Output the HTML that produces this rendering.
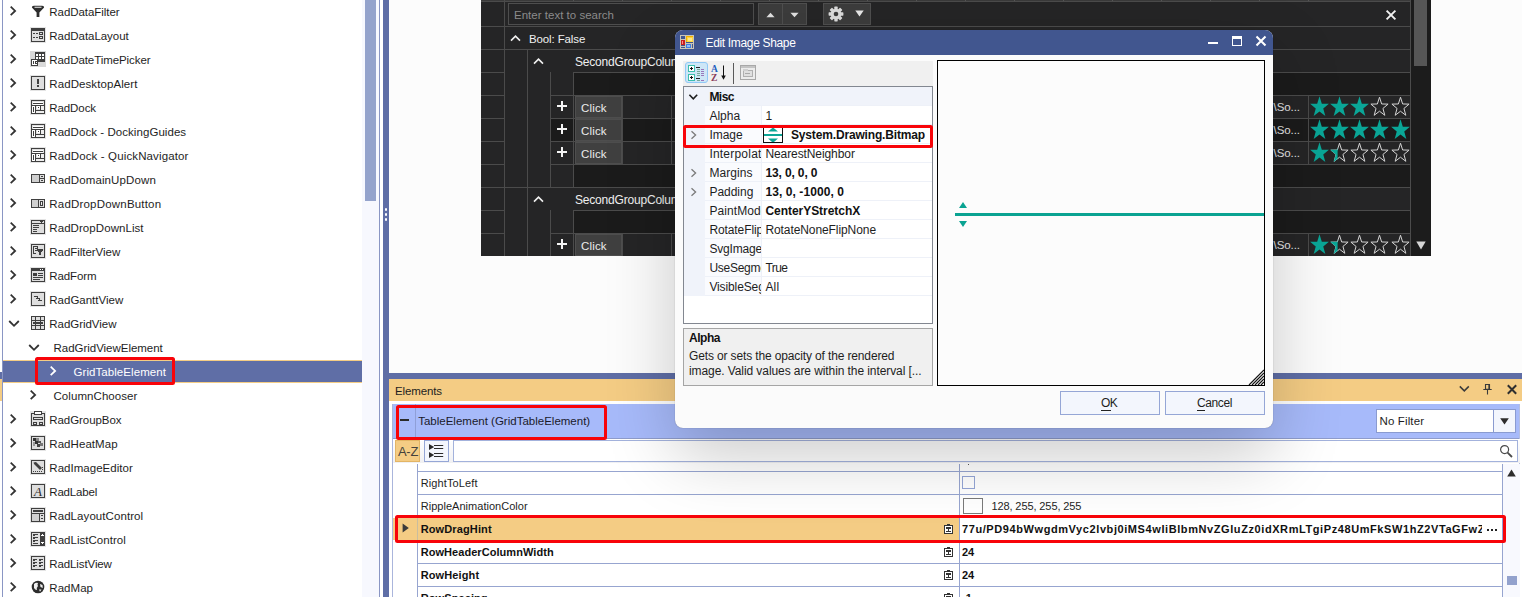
<!DOCTYPE html>
<html><head><meta charset="utf-8"><title>UI</title>
<style>
html,body{margin:0;padding:0;}
body{width:1522px;height:597px;overflow:hidden;position:relative;background:#fff;font-family:"Liberation Sans",sans-serif;font-size:11.5px;}
div,span,svg{position:absolute;}

</style></head>
<body>
<div style="left:0px;top:0px;width:383px;height:597px;background:#ffffff;"></div>
<div style="left:2px;top:0px;width:1px;height:597px;background:#8a96c4;"></div>
<div style="left:0px;top:372px;width:2px;height:7px;background:#5f6ea6;"></div>
<div style="left:0px;top:379px;width:2px;height:22px;background:#f4cc84;"></div>
<div style="left:362px;top:0px;width:17px;height:597px;background:#f7f8fe;"></div>
<div style="left:365px;top:0px;width:11px;height:201px;background:#94a3cc;"></div>
<div style="left:379px;top:0px;width:1px;height:597px;background:#8a96c4;"></div>
<div style="left:383px;top:0px;width:6px;height:597px;background:#5f6ea6;"></div>
<div style="left:385px;top:208px;width:2px;height:3px;background:#ffffff;border-radius:1px;"></div>
<div style="left:385px;top:213px;width:2px;height:3px;background:#ffffff;border-radius:1px;"></div>
<div style="left:385px;top:218px;width:2px;height:3px;background:#ffffff;border-radius:1px;"></div>
<svg style="position:absolute;left:9px;top:4.3px" width="10" height="14" viewBox="0 0 10 14"><path d="M1.7 2.7 L6.1 6.9 L1.7 11.1" fill="none" stroke="#333333" stroke-width="1.8"/></svg>
<svg style="position:absolute;left:30px;top:4.2px" width="16" height="16" viewBox="0 0 16 16" shape-rendering="crispEdges"><g shape-rendering="geometricPrecision"><path d="M1.9 3.4 Q1.7 2 3.8 1.8 L12.2 1.8 Q14.3 2 14.1 3.4 L9.4 8.4 L9.4 13 L6.6 13 L6.6 8.4 Z" fill="#2d2d2d"/><rect x="4.5" y="2.7" width="7" height="1.2" fill="#cfcfcf"/></g></svg>
<span style="position:absolute;top:3.50px;height:16px;line-height:16px;font-size:11.5px;color:#1e1e1e;white-space:pre;left:49.3px;letter-spacing:-0.051px;">RadDataFilter</span>
<svg style="position:absolute;left:9px;top:28.3px" width="10" height="14" viewBox="0 0 10 14"><path d="M1.7 2.7 L6.1 6.9 L1.7 11.1" fill="none" stroke="#333333" stroke-width="1.8"/></svg>
<svg style="position:absolute;left:30px;top:27px" width="16" height="16" viewBox="0 0 16 16" shape-rendering="crispEdges"><rect x="0" y="0" width="16" height="16" fill="#e4e4e4"/><rect x="1.5" y="1.5" width="13" height="13" fill="#dedede" stroke="#3f3f3f"/><rect x="1" y="1" width="14" height="3" fill="#3f3f3f"/><rect x="3" y="6" width="2" height="1" fill="#3f3f3f"/><rect x="6" y="6" width="2" height="1" fill="#3f3f3f"/><rect x="3" y="10" width="2" height="1" fill="#3f3f3f"/><rect x="6" y="10" width="2" height="1" fill="#3f3f3f"/><rect x="9" y="5" width="4" height="1" fill="#3f3f3f"/><rect x="9" y="7" width="4" height="1" fill="#3f3f3f"/><rect x="9" y="5" width="1" height="3" fill="#3f3f3f"/><rect x="12" y="5" width="1" height="3" fill="#3f3f3f"/><rect x="9" y="9" width="4" height="1" fill="#3f3f3f"/><rect x="9" y="11" width="4" height="1" fill="#3f3f3f"/><rect x="9" y="9" width="1" height="3" fill="#3f3f3f"/><rect x="12" y="9" width="1" height="3" fill="#3f3f3f"/></svg>
<span style="position:absolute;top:27.50px;height:16px;line-height:16px;font-size:11.5px;color:#1e1e1e;white-space:pre;left:49.3px;letter-spacing:-0.040px;">RadDataLayout</span>
<svg style="position:absolute;left:9px;top:52.3px" width="10" height="14" viewBox="0 0 10 14"><path d="M1.7 2.7 L6.1 6.9 L1.7 11.1" fill="none" stroke="#333333" stroke-width="1.8"/></svg>
<svg style="position:absolute;left:30px;top:51px" width="16" height="16" viewBox="0 0 16 16" shape-rendering="crispEdges"><rect x="0" y="0" width="16" height="16" fill="#d9d9d9"/><rect x="5" y="1" width="10" height="10" fill="#3f3f3f"/><rect x="6" y="3" width="2" height="2" fill="#fff"/><rect x="9" y="3" width="2" height="2" fill="#fff"/><rect x="12" y="3" width="2" height="2" fill="#fff"/><rect x="6" y="6" width="2" height="2" fill="#fff"/><rect x="9" y="6" width="2" height="2" fill="#fff"/><rect x="12" y="6" width="2" height="2" fill="#fff"/><rect x="1" y="8" width="7" height="7" fill="#3f3f3f"/><rect x="2" y="9" width="5" height="5" fill="#fff"/><rect x="3" y="10" width="1" height="3" fill="#3f3f3f"/><rect x="5" y="10" width="1" height="3" fill="#3f3f3f"/><rect x="5" y="10" width="2" height="1" fill="#3f3f3f"/><rect x="5" y="12" width="2" height="1" fill="#3f3f3f"/></svg>
<span style="position:absolute;top:51.50px;height:16px;line-height:16px;font-size:11.5px;color:#1e1e1e;white-space:pre;left:49.3px;letter-spacing:-0.072px;">RadDateTimePicker</span>
<svg style="position:absolute;left:9px;top:76.3px" width="10" height="14" viewBox="0 0 10 14"><path d="M1.7 2.7 L6.1 6.9 L1.7 11.1" fill="none" stroke="#333333" stroke-width="1.8"/></svg>
<svg style="position:absolute;left:30px;top:75px" width="16" height="16" viewBox="0 0 16 16" shape-rendering="crispEdges"><rect x="0" y="0" width="16" height="16" fill="#e4e4e4"/><rect x="1.5" y="1.5" width="13" height="13" fill="#dedede" stroke="#3f3f3f"/><rect x="7" y="4" width="2" height="5" fill="#3f3f3f"/><rect x="7" y="10" width="2" height="2" fill="#3f3f3f"/></svg>
<span style="position:absolute;top:75.50px;height:16px;line-height:16px;font-size:11.5px;color:#1e1e1e;white-space:pre;left:49.3px;letter-spacing:0.087px;">RadDesktopAlert</span>
<svg style="position:absolute;left:9px;top:100.3px" width="10" height="14" viewBox="0 0 10 14"><path d="M1.7 2.7 L6.1 6.9 L1.7 11.1" fill="none" stroke="#333333" stroke-width="1.8"/></svg>
<svg style="position:absolute;left:30px;top:99px" width="16" height="16" viewBox="0 0 16 16" shape-rendering="crispEdges"><rect x="0" y="0" width="16" height="16" fill="#e4e4e4"/><rect x="1.5" y="1.5" width="13" height="13" fill="#dedede" stroke="#3f3f3f"/><rect x="3" y="3" width="10" height="1" fill="#fff"/><rect x="3" y="4" width="10" height="1" fill="#3f3f3f"/><rect x="3" y="5" width="10" height="1" fill="#fff"/><rect x="2" y="6" width="12" height="1" fill="#3f3f3f"/><rect x="2" y="7" width="3" height="7" fill="#fff"/><rect x="3" y="8" width="1" height="5" fill="#3f3f3f"/><rect x="5" y="6" width="1" height="9" fill="#3f3f3f"/><rect x="6" y="11" width="9" height="1" fill="#3f3f3f"/><rect x="7" y="7" width="3" height="3" fill="#fff"/><rect x="8" y="8" width="1" height="1" fill="#3f3f3f"/><rect x="10" y="6" width="1" height="5" fill="#3f3f3f"/><rect x="11" y="7" width="3" height="4" fill="#eee"/><rect x="6" y="12" width="8" height="2" fill="#eee"/></svg>
<span style="position:absolute;top:99.50px;height:16px;line-height:16px;font-size:11.5px;color:#1e1e1e;white-space:pre;left:49.3px;letter-spacing:-0.090px;">RadDock</span>
<svg style="position:absolute;left:9px;top:124.3px" width="10" height="14" viewBox="0 0 10 14"><path d="M1.7 2.7 L6.1 6.9 L1.7 11.1" fill="none" stroke="#333333" stroke-width="1.8"/></svg>
<svg style="position:absolute;left:30px;top:123px" width="16" height="16" viewBox="0 0 16 16" shape-rendering="crispEdges"><rect x="0" y="0" width="16" height="16" fill="#e4e4e4"/><rect x="1.5" y="1.5" width="13" height="13" fill="#dedede" stroke="#3f3f3f"/><rect x="3" y="3" width="10" height="1" fill="#fff"/><rect x="3" y="4" width="10" height="1" fill="#3f3f3f"/><rect x="3" y="5" width="10" height="1" fill="#fff"/><rect x="2" y="6" width="12" height="1" fill="#3f3f3f"/><rect x="2" y="7" width="3" height="7" fill="#fff"/><rect x="3" y="8" width="1" height="5" fill="#3f3f3f"/><rect x="5" y="6" width="1" height="9" fill="#3f3f3f"/><rect x="6" y="11" width="9" height="1" fill="#3f3f3f"/><rect x="7" y="7" width="3" height="3" fill="#fff"/><rect x="8" y="8" width="1" height="1" fill="#3f3f3f"/><rect x="10" y="6" width="1" height="5" fill="#3f3f3f"/><rect x="11" y="7" width="3" height="4" fill="#eee"/><rect x="6" y="12" width="8" height="2" fill="#eee"/></svg>
<span style="position:absolute;top:123.50px;height:16px;line-height:16px;font-size:11.5px;color:#1e1e1e;white-space:pre;left:49.3px;letter-spacing:0.060px;">RadDock - DockingGuides</span>
<svg style="position:absolute;left:9px;top:148.3px" width="10" height="14" viewBox="0 0 10 14"><path d="M1.7 2.7 L6.1 6.9 L1.7 11.1" fill="none" stroke="#333333" stroke-width="1.8"/></svg>
<svg style="position:absolute;left:30px;top:147px" width="16" height="16" viewBox="0 0 16 16" shape-rendering="crispEdges"><rect x="0" y="0" width="16" height="16" fill="#e4e4e4"/><rect x="1.5" y="1.5" width="13" height="13" fill="#dedede" stroke="#3f3f3f"/><rect x="3" y="3" width="10" height="1" fill="#fff"/><rect x="3" y="4" width="10" height="1" fill="#3f3f3f"/><rect x="3" y="5" width="10" height="1" fill="#fff"/><rect x="2" y="6" width="12" height="1" fill="#3f3f3f"/><rect x="2" y="7" width="3" height="7" fill="#fff"/><rect x="3" y="8" width="1" height="5" fill="#3f3f3f"/><rect x="5" y="6" width="1" height="9" fill="#3f3f3f"/><rect x="6" y="11" width="9" height="1" fill="#3f3f3f"/><rect x="7" y="7" width="3" height="3" fill="#fff"/><rect x="8" y="8" width="1" height="1" fill="#3f3f3f"/><rect x="10" y="6" width="1" height="5" fill="#3f3f3f"/><rect x="11" y="7" width="3" height="4" fill="#eee"/><rect x="6" y="12" width="8" height="2" fill="#eee"/></svg>
<span style="position:absolute;top:147.50px;height:16px;line-height:16px;font-size:11.5px;color:#1e1e1e;white-space:pre;left:49.3px;letter-spacing:0.129px;">RadDock - QuickNavigator</span>
<svg style="position:absolute;left:9px;top:172.3px" width="10" height="14" viewBox="0 0 10 14"><path d="M1.7 2.7 L6.1 6.9 L1.7 11.1" fill="none" stroke="#333333" stroke-width="1.8"/></svg>
<svg style="position:absolute;left:30px;top:171px" width="16" height="16" viewBox="0 0 16 16" shape-rendering="crispEdges"><rect x="1.5" y="3.5" width="13" height="8" fill="#dedede" stroke="#3f3f3f"/><rect x="9" y="4" width="1" height="8" fill="#3f3f3f"/><rect x="10" y="7" width="5" height="1" fill="#3f3f3f"/><rect x="11" y="5" width="2" height="1" fill="#3f3f3f"/><rect x="11" y="9" width="2" height="1" fill="#3f3f3f"/><rect x="2" y="4" width="7" height="7" fill="#cfcfcf"/></svg>
<span style="position:absolute;top:171.50px;height:16px;line-height:16px;font-size:11.5px;color:#1e1e1e;white-space:pre;left:49.3px;letter-spacing:0.122px;">RadDomainUpDown</span>
<svg style="position:absolute;left:9px;top:196.3px" width="10" height="14" viewBox="0 0 10 14"><path d="M1.7 2.7 L6.1 6.9 L1.7 11.1" fill="none" stroke="#333333" stroke-width="1.8"/></svg>
<svg style="position:absolute;left:30px;top:195px" width="16" height="16" viewBox="0 0 16 16" shape-rendering="crispEdges"><rect x="1.5" y="4.5" width="13" height="8" fill="#dedede" stroke="#3f3f3f"/><rect x="8" y="5" width="1" height="8" fill="#3f3f3f"/><rect x="10" y="6" width="3" height="5" fill="#3f3f3f"/><rect x="11" y="7" width="1" height="3" fill="#eee"/><rect x="2" y="5" width="6" height="7" fill="#cfcfcf"/></svg>
<span style="position:absolute;top:195.50px;height:16px;line-height:16px;font-size:11.5px;color:#1e1e1e;white-space:pre;left:49.3px;letter-spacing:0.196px;">RadDropDownButton</span>
<svg style="position:absolute;left:9px;top:220.3px" width="10" height="14" viewBox="0 0 10 14"><path d="M1.7 2.7 L6.1 6.9 L1.7 11.1" fill="none" stroke="#333333" stroke-width="1.8"/></svg>
<svg style="position:absolute;left:30px;top:219px" width="16" height="16" viewBox="0 0 16 16" shape-rendering="crispEdges"><rect x="0" y="0" width="16" height="16" fill="#e4e4e4"/><rect x="1.5" y="1.5" width="13" height="13" fill="#dedede" stroke="#3f3f3f"/><rect x="1" y="4" width="14" height="1" fill="#3f3f3f"/><rect x="10" y="2" width="3" height="1" fill="#3f3f3f"/><rect x="11" y="3" width="1" height="1" fill="#3f3f3f"/><rect x="3" y="6" width="6" height="1" fill="#3f3f3f"/><rect x="3" y="8" width="6" height="1" fill="#3f3f3f"/><rect x="3" y="10" width="4" height="1" fill="#3f3f3f"/><rect x="3" y="12" width="4" height="1" fill="#3f3f3f"/></svg>
<span style="position:absolute;top:219.50px;height:16px;line-height:16px;font-size:11.5px;color:#1e1e1e;white-space:pre;left:49.3px;letter-spacing:0.068px;">RadDropDownList</span>
<svg style="position:absolute;left:9px;top:244.3px" width="10" height="14" viewBox="0 0 10 14"><path d="M1.7 2.7 L6.1 6.9 L1.7 11.1" fill="none" stroke="#333333" stroke-width="1.8"/></svg>
<svg style="position:absolute;left:30px;top:243px" width="16" height="16" viewBox="0 0 16 16" shape-rendering="crispEdges"><rect x="0" y="0" width="16" height="16" fill="#e4e4e4"/><rect x="1.5" y="1.5" width="13" height="13" fill="#dedede" stroke="#3f3f3f"/><rect x="3" y="3" width="5" height="1" fill="#3f3f3f"/><rect x="3" y="3" width="1" height="8" fill="#3f3f3f"/><rect x="3" y="10" width="3" height="1" fill="#3f3f3f"/><rect x="5" y="5" width="3" height="1" fill="#3f3f3f"/><rect x="5" y="7" width="2" height="1" fill="#3f3f3f"/><rect x="7" y="6" width="6" height="2" fill="#3f3f3f"/><rect x="8" y="8" width="4" height="1" fill="#3f3f3f"/><rect x="9" y="9" width="2" height="3" fill="#3f3f3f"/><rect x="7" y="3" width="1" height="3" fill="#3f3f3f"/></svg>
<span style="position:absolute;top:243.50px;height:16px;line-height:16px;font-size:11.5px;color:#1e1e1e;white-space:pre;left:49.3px;letter-spacing:-0.038px;">RadFilterView</span>
<svg style="position:absolute;left:9px;top:268.3px" width="10" height="14" viewBox="0 0 10 14"><path d="M1.7 2.7 L6.1 6.9 L1.7 11.1" fill="none" stroke="#333333" stroke-width="1.8"/></svg>
<svg style="position:absolute;left:30px;top:267px" width="16" height="16" viewBox="0 0 16 16" shape-rendering="crispEdges"><rect x="0" y="0" width="16" height="16" fill="#e4e4e4"/><rect x="1.5" y="1.5" width="13" height="13" fill="#dedede" stroke="#3f3f3f"/><rect x="1" y="1" width="14" height="3" fill="#3f3f3f"/><rect x="10" y="2" width="1" height="1" fill="#fff"/><rect x="12" y="2" width="1" height="1" fill="#fff"/><rect x="3" y="6" width="4" height="3" fill="#3f3f3f"/><rect x="8" y="6" width="5" height="1" fill="#3f3f3f"/><rect x="8" y="8" width="5" height="1" fill="#3f3f3f"/><rect x="3" y="10" width="10" height="1" fill="#3f3f3f"/><rect x="3" y="12" width="7" height="1" fill="#3f3f3f"/></svg>
<span style="position:absolute;top:267.50px;height:16px;line-height:16px;font-size:11.5px;color:#1e1e1e;white-space:pre;left:49.3px;letter-spacing:-0.118px;">RadForm</span>
<svg style="position:absolute;left:9px;top:292.3px" width="10" height="14" viewBox="0 0 10 14"><path d="M1.7 2.7 L6.1 6.9 L1.7 11.1" fill="none" stroke="#333333" stroke-width="1.8"/></svg>
<svg style="position:absolute;left:30px;top:291px" width="16" height="16" viewBox="0 0 16 16" shape-rendering="crispEdges"><rect x="0" y="0" width="16" height="16" fill="#e4e4e4"/><rect x="1.5" y="1.5" width="13" height="13" fill="#dedede" stroke="#3f3f3f"/><rect x="4" y="5" width="4" height="1" fill="#3f3f3f"/><rect x="6" y="7" width="4" height="1" fill="#3f3f3f"/><rect x="8" y="9" width="4" height="1" fill="#3f3f3f"/><rect x="7" y="6" width="1" height="1" fill="#3f3f3f"/><rect x="9" y="8" width="1" height="1" fill="#3f3f3f"/></svg>
<span style="position:absolute;top:291.50px;height:16px;line-height:16px;font-size:11.5px;color:#1e1e1e;white-space:pre;left:49.3px;letter-spacing:-0.004px;">RadGanttView</span>
<svg style="position:absolute;left:7px;top:319px" width="14" height="10" viewBox="0 0 14 10"><path d="M2.2 2 L7 6.8 L11.8 2" fill="none" stroke="#333333" stroke-width="1.8"/></svg>
<svg style="position:absolute;left:30px;top:315px" width="16" height="16" viewBox="0 0 16 16" shape-rendering="crispEdges"><rect x="1.5" y="1.5" width="13" height="13" fill="#dedede" stroke="#3f3f3f"/><rect x="1" y="5" width="14" height="1" fill="#3f3f3f"/><rect x="1" y="10" width="14" height="1" fill="#3f3f3f"/><rect x="5" y="1" width="1" height="14" fill="#3f3f3f"/><rect x="10" y="1" width="1" height="14" fill="#3f3f3f"/><rect x="3" y="7" width="10" height="2" fill="#3f3f3f"/></svg>
<span style="position:absolute;top:315.50px;height:16px;line-height:16px;font-size:11.5px;color:#1e1e1e;white-space:pre;left:49.3px;letter-spacing:-0.039px;">RadGridView</span>
<svg style="position:absolute;left:27px;top:343px" width="14" height="10" viewBox="0 0 14 10"><path d="M2.2 2 L7 6.8 L11.8 2" fill="none" stroke="#333333" stroke-width="1.8"/></svg>
<span style="position:absolute;top:339.50px;height:16px;line-height:16px;font-size:11.5px;color:#1e1e1e;white-space:pre;left:53.5px;letter-spacing:-0.027px;">RadGridViewElement</span>
<div style="left:3px;top:360px;width:359px;height:23px;background:#5f6ea6;border-top:1px solid #f4cc84;border-bottom:1px solid #f4cc84;box-sizing:border-box;"></div>
<svg style="position:absolute;left:49px;top:364.3px" width="10" height="14" viewBox="0 0 10 14"><path d="M1.7 2.7 L6.1 6.9 L1.7 11.1" fill="none" stroke="#ffffff" stroke-width="1.8"/></svg>
<span style="position:absolute;top:363.50px;height:16px;line-height:16px;font-size:11.5px;color:#ffffff;white-space:pre;left:73.5px;letter-spacing:0.067px;">GridTableElement</span>
<svg style="position:absolute;left:29px;top:388.3px" width="10" height="14" viewBox="0 0 10 14"><path d="M1.7 2.7 L6.1 6.9 L1.7 11.1" fill="none" stroke="#333333" stroke-width="1.8"/></svg>
<span style="position:absolute;top:387.50px;height:16px;line-height:16px;font-size:11.5px;color:#1e1e1e;white-space:pre;left:53.5px;letter-spacing:0.065px;">ColumnChooser</span>
<svg style="position:absolute;left:9px;top:412.3px" width="10" height="14" viewBox="0 0 10 14"><path d="M1.7 2.7 L6.1 6.9 L1.7 11.1" fill="none" stroke="#333333" stroke-width="1.8"/></svg>
<svg style="position:absolute;left:30px;top:411px" width="16" height="16" viewBox="0 0 16 16" shape-rendering="crispEdges"><rect x="0" y="0" width="16" height="16" fill="#e4e4e4"/><rect x="1.5" y="2.5" width="13" height="12" fill="#dedede" stroke="#3f3f3f"/><rect x="4" y="1" width="8" height="2" fill="#fff"/><rect x="4" y="0" width="8" height="1" fill="#3f3f3f"/><rect x="4" y="3" width="8" height="1" fill="#3f3f3f"/><rect x="4" y="0" width="1" height="4" fill="#3f3f3f"/><rect x="11" y="0" width="1" height="4" fill="#3f3f3f"/><rect x="3" y="6" width="10" height="1" fill="#3f3f3f"/><rect x="3" y="8" width="10" height="1" fill="#3f3f3f"/><rect x="3" y="6" width="1" height="3" fill="#3f3f3f"/><rect x="12" y="6" width="1" height="3" fill="#3f3f3f"/><rect x="3" y="11" width="4" height="1" fill="#3f3f3f"/><rect x="3" y="13" width="4" height="1" fill="#3f3f3f"/><rect x="3" y="11" width="1" height="3" fill="#3f3f3f"/><rect x="6" y="11" width="1" height="3" fill="#3f3f3f"/><rect x="9" y="11" width="4" height="1" fill="#3f3f3f"/><rect x="9" y="13" width="4" height="1" fill="#3f3f3f"/><rect x="9" y="11" width="1" height="3" fill="#3f3f3f"/><rect x="12" y="11" width="1" height="3" fill="#3f3f3f"/></svg>
<span style="position:absolute;top:411.50px;height:16px;line-height:16px;font-size:11.5px;color:#1e1e1e;white-space:pre;left:49.3px;letter-spacing:-0.072px;">RadGroupBox</span>
<svg style="position:absolute;left:9px;top:436.3px" width="10" height="14" viewBox="0 0 10 14"><path d="M1.7 2.7 L6.1 6.9 L1.7 11.1" fill="none" stroke="#333333" stroke-width="1.8"/></svg>
<svg style="position:absolute;left:30px;top:435px" width="16" height="16" viewBox="0 0 16 16" shape-rendering="crispEdges"><rect x="0" y="0" width="16" height="16" fill="#e4e4e4"/><rect x="1.5" y="1.5" width="13" height="13" fill="#dedede" stroke="#3f3f3f"/><rect x="3" y="3" width="3" height="3" fill="#333"/><rect x="6" y="3" width="3" height="3" fill="#888"/><rect x="5" y="6" width="3" height="3" fill="#333"/><rect x="8" y="6" width="3" height="2" fill="#555"/><rect x="7" y="9" width="3" height="3" fill="#444"/><rect x="10" y="8" width="3" height="3" fill="#777"/><rect x="3" y="7" width="2" height="4" fill="#999"/></svg>
<span style="position:absolute;top:435.50px;height:16px;line-height:16px;font-size:11.5px;color:#1e1e1e;white-space:pre;left:49.3px;letter-spacing:0.058px;">RadHeatMap</span>
<svg style="position:absolute;left:9px;top:460.3px" width="10" height="14" viewBox="0 0 10 14"><path d="M1.7 2.7 L6.1 6.9 L1.7 11.1" fill="none" stroke="#333333" stroke-width="1.8"/></svg>
<svg style="position:absolute;left:30px;top:459px" width="16" height="16" viewBox="0 0 16 16" shape-rendering="crispEdges"><rect x="0" y="0" width="16" height="16" fill="#e4e4e4"/><rect x="1.5" y="1.5" width="13" height="13" fill="#dedede" stroke="#3f3f3f"/><g shape-rendering="geometricPrecision"><path d="M3.5 3.5 L6 3 L12 9 L10 11 L4 5 Z" fill="#3f3f3f"/></g><rect x="3" y="12" width="1" height="1" fill="#3f3f3f"/><rect x="5" y="12" width="1" height="1" fill="#3f3f3f"/><rect x="7" y="12" width="1" height="1" fill="#3f3f3f"/><rect x="9" y="12" width="1" height="1" fill="#3f3f3f"/><rect x="11" y="12" width="1" height="1" fill="#3f3f3f"/><rect x="12" y="10" width="1" height="1" fill="#3f3f3f"/><rect x="12" y="8" width="1" height="1" fill="#3f3f3f"/></svg>
<span style="position:absolute;top:459.50px;height:16px;line-height:16px;font-size:11.5px;color:#1e1e1e;white-space:pre;left:49.3px;letter-spacing:0.028px;">RadImageEditor</span>
<svg style="position:absolute;left:9px;top:484.3px" width="10" height="14" viewBox="0 0 10 14"><path d="M1.7 2.7 L6.1 6.9 L1.7 11.1" fill="none" stroke="#333333" stroke-width="1.8"/></svg>
<svg style="position:absolute;left:30px;top:483px" width="16" height="16" viewBox="0 0 16 16" shape-rendering="crispEdges"><rect x="0" y="0" width="16" height="16" fill="#e4e4e4"/><rect x="1.5" y="1.5" width="13" height="13" fill="#dedede" stroke="#3f3f3f"/><text x="8" y="12.5" font-family="Liberation Serif" font-style="italic" font-size="13" text-anchor="middle" fill="#2d2d2d" shape-rendering="geometricPrecision">A</text></svg>
<span style="position:absolute;top:483.50px;height:16px;line-height:16px;font-size:11.5px;color:#1e1e1e;white-space:pre;left:49.3px;letter-spacing:-0.191px;">RadLabel</span>
<svg style="position:absolute;left:9px;top:508.3px" width="10" height="14" viewBox="0 0 10 14"><path d="M1.7 2.7 L6.1 6.9 L1.7 11.1" fill="none" stroke="#333333" stroke-width="1.8"/></svg>
<svg style="position:absolute;left:30px;top:507px" width="16" height="16" viewBox="0 0 16 16" shape-rendering="crispEdges"><rect x="0" y="0" width="16" height="16" fill="#e4e4e4"/><rect x="1.5" y="1.5" width="13" height="13" fill="#dedede" stroke="#3f3f3f"/><rect x="3" y="3" width="10" height="2" fill="#3f3f3f"/><rect x="1" y="6" width="14" height="1" fill="#3f3f3f"/><rect x="9" y="6" width="1" height="9" fill="#3f3f3f"/><rect x="11" y="8" width="2" height="1" fill="#3f3f3f"/><rect x="11" y="11" width="2" height="1" fill="#3f3f3f"/><rect x="2" y="7" width="7" height="7" fill="#d0d0d0"/></svg>
<span style="position:absolute;top:507.50px;height:16px;line-height:16px;font-size:11.5px;color:#1e1e1e;white-space:pre;left:49.3px;letter-spacing:0.077px;">RadLayoutControl</span>
<svg style="position:absolute;left:9px;top:532.3px" width="10" height="14" viewBox="0 0 10 14"><path d="M1.7 2.7 L6.1 6.9 L1.7 11.1" fill="none" stroke="#333333" stroke-width="1.8"/></svg>
<svg style="position:absolute;left:30px;top:531px" width="16" height="16" viewBox="0 0 16 16" shape-rendering="crispEdges"><rect x="0" y="0" width="16" height="16" fill="#e4e4e4"/><rect x="1.5" y="1.5" width="13" height="13" fill="#dedede" stroke="#3f3f3f"/><rect x="3" y="3" width="5" height="1" fill="#3f3f3f"/><rect x="3" y="4" width="2" height="1" fill="#3f3f3f"/><rect x="3" y="6" width="5" height="1" fill="#3f3f3f"/><rect x="3" y="7" width="2" height="1" fill="#3f3f3f"/><rect x="3" y="9" width="5" height="1" fill="#3f3f3f"/><rect x="3" y="10" width="2" height="1" fill="#3f3f3f"/><rect x="3" y="12" width="5" height="1" fill="#3f3f3f"/><rect x="10" y="1" width="5" height="14" fill="#3f3f3f"/><rect x="12" y="3" width="1" height="1" fill="#fff"/><rect x="11" y="4" width="3" height="1" fill="#fff"/><rect x="11" y="11" width="3" height="1" fill="#fff"/><rect x="12" y="12" width="1" height="1" fill="#fff"/></svg>
<span style="position:absolute;top:531.50px;height:16px;line-height:16px;font-size:11.5px;color:#1e1e1e;white-space:pre;left:49.3px;letter-spacing:0.028px;">RadListControl</span>
<svg style="position:absolute;left:9px;top:556.3px" width="10" height="14" viewBox="0 0 10 14"><path d="M1.7 2.7 L6.1 6.9 L1.7 11.1" fill="none" stroke="#333333" stroke-width="1.8"/></svg>
<svg style="position:absolute;left:30px;top:555px" width="16" height="16" viewBox="0 0 16 16" shape-rendering="crispEdges"><rect x="0" y="0" width="16" height="16" fill="#e4e4e4"/><rect x="1.5" y="1.5" width="13" height="13" fill="#dedede" stroke="#3f3f3f"/><rect x="3" y="4" width="4" height="1" fill="#3f3f3f"/><rect x="3" y="5" width="2" height="1" fill="#3f3f3f"/><rect x="9" y="4" width="4" height="1" fill="#3f3f3f"/><rect x="9" y="5" width="2" height="1" fill="#3f3f3f"/><rect x="3" y="7" width="4" height="1" fill="#3f3f3f"/><rect x="3" y="8" width="2" height="1" fill="#3f3f3f"/><rect x="9" y="7" width="4" height="1" fill="#3f3f3f"/><rect x="9" y="8" width="2" height="1" fill="#3f3f3f"/><rect x="3" y="10" width="4" height="1" fill="#3f3f3f"/><rect x="3" y="11" width="2" height="1" fill="#3f3f3f"/><rect x="9" y="10" width="4" height="1" fill="#3f3f3f"/><rect x="9" y="11" width="2" height="1" fill="#3f3f3f"/></svg>
<span style="position:absolute;top:555.50px;height:16px;line-height:16px;font-size:11.5px;color:#1e1e1e;white-space:pre;left:49.3px;letter-spacing:-0.109px;">RadListView</span>
<svg style="position:absolute;left:9px;top:580.3px" width="10" height="14" viewBox="0 0 10 14"><path d="M1.7 2.7 L6.1 6.9 L1.7 11.1" fill="none" stroke="#333333" stroke-width="1.8"/></svg>
<svg style="position:absolute;left:30px;top:579px" width="16" height="16" viewBox="0 0 16 16" shape-rendering="crispEdges"><g shape-rendering="geometricPrecision"><circle cx="8" cy="8" r="6.3" fill="#2d2d2d"/><path d="M4 5 Q6 3 8 4 Q7 6 8 7 Q6 9 7 11 Q5 11 4 9 Z M10 5 L12.5 6 L12.8 9 L10.5 8 Z M9 10.5 L11.5 10.5 L10 12.8 Z" fill="#f0f0f0"/></g></svg>
<span style="position:absolute;top:579.50px;height:16px;line-height:16px;font-size:11.5px;color:#1e1e1e;white-space:pre;left:49.3px;letter-spacing:0.039px;">RadMap</span>
<div style="left:35px;top:356.5px;width:140px;height:28.5px;border:3px solid #f80409;border-radius:2.5px;box-sizing:border-box;"></div>
<div style="left:389px;top:0px;width:1133px;height:373px;background:#fcfcfc;"></div>
<div style="left:481px;top:0px;width:950px;height:256px;background:#252526;"></div>
<div style="left:1411px;top:0px;width:20px;height:256px;background:#1c1c1c;"></div>
<div style="left:1414px;top:0px;width:13px;height:66px;background:#565656;"></div>
<svg style="position:absolute;left:1416px;top:241px" width="10" height="9" viewBox="0 0 10 9"><path d="M0.3 0.5 L9.7 0.5 L5 8.6 Z" fill="#d6d6d6"/></svg>
<div style="left:1410px;top:0px;width:1px;height:256px;background:#4b4b4b;"></div>
<div style="left:481px;top:0px;width:929px;height:1px;background:#3a3a3a;"></div>
<div style="left:481px;top:1px;width:929px;height:1px;background:#4b4b4b;"></div>
<div style="left:504px;top:0px;width:1px;height:1px;background:#555;"></div>
<div style="left:573px;top:0px;width:1px;height:1px;background:#555;"></div>
<div style="left:622px;top:0px;width:1px;height:1px;background:#555;"></div>
<div style="left:671px;top:0px;width:1px;height:1px;background:#555;"></div>
<div style="left:720px;top:0px;width:1px;height:1px;background:#555;"></div>
<div style="left:769px;top:0px;width:1px;height:1px;background:#555;"></div>
<div style="left:818px;top:0px;width:1px;height:1px;background:#555;"></div>
<div style="left:867px;top:0px;width:1px;height:1px;background:#555;"></div>
<div style="left:916px;top:0px;width:1px;height:1px;background:#555;"></div>
<div style="left:965px;top:0px;width:1px;height:1px;background:#555;"></div>
<div style="left:1014px;top:0px;width:1px;height:1px;background:#555;"></div>
<div style="left:1063px;top:0px;width:1px;height:1px;background:#555;"></div>
<div style="left:1112px;top:0px;width:1px;height:1px;background:#555;"></div>
<div style="left:1161px;top:0px;width:1px;height:1px;background:#555;"></div>
<div style="left:1210px;top:0px;width:1px;height:1px;background:#555;"></div>
<div style="left:1259px;top:0px;width:1px;height:1px;background:#555;"></div>
<div style="left:1308px;top:0px;width:1px;height:1px;background:#555;"></div>
<div style="left:504px;top:0px;width:1px;height:256px;background:#4b4b4b;"></div>
<div style="left:481px;top:26px;width:23px;height:1px;background:#4b4b4b;"></div>
<div style="left:481px;top:49px;width:23px;height:1px;background:#4b4b4b;"></div>
<div style="left:481px;top:72px;width:23px;height:1px;background:#4b4b4b;"></div>
<div style="left:481px;top:95px;width:23px;height:1px;background:#4b4b4b;"></div>
<div style="left:481px;top:118px;width:23px;height:1px;background:#4b4b4b;"></div>
<div style="left:481px;top:141px;width:23px;height:1px;background:#4b4b4b;"></div>
<div style="left:481px;top:164px;width:23px;height:1px;background:#4b4b4b;"></div>
<div style="left:481px;top:187px;width:23px;height:1px;background:#4b4b4b;"></div>
<div style="left:481px;top:210px;width:23px;height:1px;background:#4b4b4b;"></div>
<div style="left:481px;top:233px;width:23px;height:1px;background:#4b4b4b;"></div>
<div style="left:505px;top:26px;width:905px;height:1px;background:#4b4b4b;"></div>
<div style="left:508px;top:3px;width:246px;height:22px;background:#252526;border:1px solid #4e4e4e;box-sizing:border-box;"></div>
<span style="position:absolute;top:6.50px;height:16px;line-height:16px;font-size:11.5px;color:#8b8b8b;white-space:pre;left:514px;letter-spacing:0.014px;">Enter text to search</span>
<div style="left:758px;top:3px;width:49px;height:22px;background:#3c3c3c;border:1px solid #4f4f4f;box-sizing:border-box;"></div>
<div style="left:782px;top:4px;width:1px;height:20px;background:#4f4f4f;"></div>
<svg style="position:absolute;left:766px;top:12px" width="9" height="6" viewBox="0 0 9 6"><path d="M0.4 5.2 L4.5 0.8 L8.6 5.2 Z" fill="#e2e2e2"/></svg>
<svg style="position:absolute;left:790px;top:12px" width="9" height="6" viewBox="0 0 9 6"><path d="M0.4 0.8 L8.6 0.8 L4.5 5.2 Z" fill="#e2e2e2"/></svg>
<div style="left:823px;top:3px;width:48px;height:22px;background:#3c3c3c;border:1px solid #4f4f4f;box-sizing:border-box;"></div>
<svg style="position:absolute;left:828px;top:6px" width="16" height="16" viewBox="-8 -8 16 16"><g fill="#dcdcdc"><rect x="-1.7" y="-7.4" width="3.4" height="4" rx="0.6" transform="rotate(0)"/><rect x="-1.7" y="-7.4" width="3.4" height="4" rx="0.6" transform="rotate(45)"/><rect x="-1.7" y="-7.4" width="3.4" height="4" rx="0.6" transform="rotate(90)"/><rect x="-1.7" y="-7.4" width="3.4" height="4" rx="0.6" transform="rotate(135)"/><rect x="-1.7" y="-7.4" width="3.4" height="4" rx="0.6" transform="rotate(180)"/><rect x="-1.7" y="-7.4" width="3.4" height="4" rx="0.6" transform="rotate(225)"/><rect x="-1.7" y="-7.4" width="3.4" height="4" rx="0.6" transform="rotate(270)"/><rect x="-1.7" y="-7.4" width="3.4" height="4" rx="0.6" transform="rotate(315)"/><circle r="5.3"/></g><circle r="2.3" fill="#3c3c3c"/></svg>
<svg style="position:absolute;left:855px;top:10px" width="9" height="7" viewBox="0 0 9 7"><path d="M0.3 0.4 L8.7 0.4 L4.5 6.6 Z" fill="#e8e8e8"/></svg>
<svg style="position:absolute;left:1385px;top:9px" width="12" height="12" viewBox="0 0 12 12"><path d="M1.6 1.6 L10.4 10.4 M10.4 1.6 L1.6 10.4" stroke="#f2f2f2" stroke-width="1.9" fill="none"/></svg>
<div style="left:505px;top:49px;width:905px;height:1px;background:#4b4b4b;"></div>
<svg style="position:absolute;left:509px;top:32.7px" width="14" height="10" viewBox="0 0 14 10"><path d="M2 7.6 L6.5 3.1 L11 7.6" fill="none" stroke="#f0f0f0" stroke-width="1.6"/></svg>
<span style="position:absolute;top:30.50px;height:16px;line-height:16px;font-size:11.5px;color:#f0f0f0;white-space:pre;left:529px;letter-spacing:-0.121px;">Bool: False</span>
<div style="left:527px;top:50px;width:1px;height:206px;background:#4b4b4b;"></div>
<svg style="position:absolute;left:532px;top:55.7px" width="14" height="10" viewBox="0 0 14 10"><path d="M2 7.6 L6.5 3.1 L11 7.6" fill="none" stroke="#f0f0f0" stroke-width="1.6"/></svg>
<span style="position:absolute;top:53.50px;height:16px;line-height:16px;font-size:12px;color:#f0f0f0;white-space:pre;left:575px;letter-spacing:-0.195px;">SecondGroupColumn</span>
<div style="left:573px;top:72px;width:837px;height:1px;background:#4b4b4b;"></div>
<div style="left:550px;top:72px;width:1px;height:115px;background:#4b4b4b;"></div>
<div style="left:573px;top:72px;width:1px;height:115px;background:#4b4b4b;"></div>
<div style="left:574px;top:73px;width:836px;height:22px;background:#1b1b1b;"></div>
<div style="left:550px;top:95px;width:860px;height:1px;background:#4b4b4b;"></div>
<div style="left:557px;top:105px;width:10px;height:2px;background:#f4f4f4;"></div>
<div style="left:561px;top:101px;width:2px;height:10px;background:#f4f4f4;"></div>
<div style="left:575px;top:96px;width:47px;height:22px;background:#404040;border:1px solid #4e4e4e;box-sizing:border-box;"></div>
<span style="position:absolute;top:99.50px;height:16px;line-height:16px;font-size:11.5px;color:#ececec;white-space:pre;left:581px;letter-spacing:0.156px;">Click</span>
<div style="left:622px;top:96px;width:1px;height:22px;background:#4b4b4b;"></div>
<div style="left:671px;top:96px;width:1px;height:22px;background:#4b4b4b;"></div>
<div style="left:1308px;top:96px;width:1px;height:22px;background:#4b4b4b;"></div>
<span style="position:absolute;top:98.80px;height:16px;line-height:16px;font-size:11.5px;color:#e6e6e6;white-space:pre;right:222px;letter-spacing:-0.060px;">\So...</span>
<div style="left:550px;top:118px;width:860px;height:1px;background:#4b4b4b;"></div>
<div style="left:551px;top:119px;width:22px;height:22px;background:#1b1b1b;"></div>
<div style="left:574px;top:119px;width:836px;height:22px;background:#1b1b1b;"></div>
<div style="left:557px;top:128px;width:10px;height:2px;background:#f4f4f4;"></div>
<div style="left:561px;top:124px;width:2px;height:10px;background:#f4f4f4;"></div>
<div style="left:575px;top:119px;width:47px;height:22px;background:#404040;border:1px solid #4e4e4e;box-sizing:border-box;"></div>
<span style="position:absolute;top:122.50px;height:16px;line-height:16px;font-size:11.5px;color:#ececec;white-space:pre;left:581px;letter-spacing:0.156px;">Click</span>
<div style="left:622px;top:119px;width:1px;height:22px;background:#4b4b4b;"></div>
<div style="left:671px;top:119px;width:1px;height:22px;background:#4b4b4b;"></div>
<div style="left:1308px;top:119px;width:1px;height:22px;background:#4b4b4b;"></div>
<span style="position:absolute;top:121.80px;height:16px;line-height:16px;font-size:11.5px;color:#e6e6e6;white-space:pre;right:222px;letter-spacing:-0.060px;">\So...</span>
<div style="left:550px;top:141px;width:860px;height:1px;background:#4b4b4b;"></div>
<div style="left:557px;top:151px;width:10px;height:2px;background:#f4f4f4;"></div>
<div style="left:561px;top:147px;width:2px;height:10px;background:#f4f4f4;"></div>
<div style="left:575px;top:142px;width:47px;height:22px;background:#404040;border:1px solid #4e4e4e;box-sizing:border-box;"></div>
<span style="position:absolute;top:145.50px;height:16px;line-height:16px;font-size:11.5px;color:#ececec;white-space:pre;left:581px;letter-spacing:0.156px;">Click</span>
<div style="left:622px;top:142px;width:1px;height:22px;background:#4b4b4b;"></div>
<div style="left:671px;top:142px;width:1px;height:22px;background:#4b4b4b;"></div>
<div style="left:1308px;top:142px;width:1px;height:22px;background:#4b4b4b;"></div>
<span style="position:absolute;top:144.80px;height:16px;line-height:16px;font-size:11.5px;color:#e6e6e6;white-space:pre;right:222px;letter-spacing:-0.060px;">\So...</span>
<div style="left:550px;top:164px;width:860px;height:1px;background:#4b4b4b;"></div>
<div style="left:574px;top:165px;width:836px;height:22px;background:#1b1b1b;"></div>
<div style="left:481px;top:187px;width:929px;height:1px;background:#4b4b4b;"></div>
<svg style="position:absolute;left:532px;top:193.7px" width="14" height="10" viewBox="0 0 14 10"><path d="M2 7.6 L6.5 3.1 L11 7.6" fill="none" stroke="#f0f0f0" stroke-width="1.6"/></svg>
<span style="position:absolute;top:191.50px;height:16px;line-height:16px;font-size:12px;color:#f0f0f0;white-space:pre;left:575px;letter-spacing:-0.195px;">SecondGroupColumn</span>
<div style="left:573px;top:210px;width:837px;height:1px;background:#4b4b4b;"></div>
<div style="left:550px;top:210px;width:1px;height:46px;background:#4b4b4b;"></div>
<div style="left:573px;top:210px;width:1px;height:46px;background:#4b4b4b;"></div>
<div style="left:574px;top:211px;width:836px;height:22px;background:#1b1b1b;"></div>
<div style="left:550px;top:233px;width:860px;height:1px;background:#4b4b4b;"></div>
<div style="left:557px;top:243px;width:10px;height:2px;background:#f4f4f4;"></div>
<div style="left:561px;top:239px;width:2px;height:10px;background:#f4f4f4;"></div>
<div style="left:575px;top:234px;width:47px;height:22px;background:#404040;border:1px solid #4e4e4e;box-sizing:border-box;"></div>
<span style="position:absolute;top:237.50px;height:16px;line-height:16px;font-size:11.5px;color:#ececec;white-space:pre;left:581px;letter-spacing:0.156px;">Click</span>
<div style="left:622px;top:234px;width:1px;height:22px;background:#4b4b4b;"></div>
<div style="left:671px;top:234px;width:1px;height:22px;background:#4b4b4b;"></div>
<div style="left:1308px;top:234px;width:1px;height:22px;background:#4b4b4b;"></div>
<span style="position:absolute;top:236.80px;height:16px;line-height:16px;font-size:11.5px;color:#e6e6e6;white-space:pre;right:222px;letter-spacing:-0.060px;">\So...</span>
<svg style="position:absolute;left:1309.7px;top:96.3px" width="19" height="20" viewBox="0 0 19 20"><polygon points="9.50,0.30 11.82,7.63 18.90,7.79 13.26,12.47 15.31,19.90 9.50,15.47 3.69,19.90 5.74,12.47 0.10,7.79 7.18,7.63" fill="#0aa697"/></svg>
<svg style="position:absolute;left:1329.9px;top:96.3px" width="19" height="20" viewBox="0 0 19 20"><polygon points="9.50,0.30 11.82,7.63 18.90,7.79 13.26,12.47 15.31,19.90 9.50,15.47 3.69,19.90 5.74,12.47 0.10,7.79 7.18,7.63" fill="#0aa697"/></svg>
<svg style="position:absolute;left:1350.1000000000001px;top:96.3px" width="19" height="20" viewBox="0 0 19 20"><polygon points="9.50,0.30 11.82,7.63 18.90,7.79 13.26,12.47 15.31,19.90 9.50,15.47 3.69,19.90 5.74,12.47 0.10,7.79 7.18,7.63" fill="#0aa697"/></svg>
<svg style="position:absolute;left:1370.3px;top:96.3px" width="19" height="20" viewBox="0 0 19 20"><polygon points="9.50,1.20 11.63,7.97 18.10,8.11 12.94,12.44 14.82,19.30 9.50,15.21 4.18,19.30 6.06,12.44 0.90,8.11 7.37,7.97" fill="none" stroke="#d4d4d4" stroke-width="1"/></svg>
<svg style="position:absolute;left:1390.5px;top:96.3px" width="19" height="20" viewBox="0 0 19 20"><polygon points="9.50,1.20 11.63,7.97 18.10,8.11 12.94,12.44 14.82,19.30 9.50,15.21 4.18,19.30 6.06,12.44 0.90,8.11 7.37,7.97" fill="none" stroke="#d4d4d4" stroke-width="1"/></svg>
<svg style="position:absolute;left:1309.7px;top:119.3px" width="19" height="20" viewBox="0 0 19 20"><polygon points="9.50,0.30 11.82,7.63 18.90,7.79 13.26,12.47 15.31,19.90 9.50,15.47 3.69,19.90 5.74,12.47 0.10,7.79 7.18,7.63" fill="#0aa697"/></svg>
<svg style="position:absolute;left:1329.9px;top:119.3px" width="19" height="20" viewBox="0 0 19 20"><polygon points="9.50,0.30 11.82,7.63 18.90,7.79 13.26,12.47 15.31,19.90 9.50,15.47 3.69,19.90 5.74,12.47 0.10,7.79 7.18,7.63" fill="#0aa697"/></svg>
<svg style="position:absolute;left:1350.1000000000001px;top:119.3px" width="19" height="20" viewBox="0 0 19 20"><polygon points="9.50,0.30 11.82,7.63 18.90,7.79 13.26,12.47 15.31,19.90 9.50,15.47 3.69,19.90 5.74,12.47 0.10,7.79 7.18,7.63" fill="#0aa697"/></svg>
<svg style="position:absolute;left:1370.3px;top:119.3px" width="19" height="20" viewBox="0 0 19 20"><polygon points="9.50,0.30 11.82,7.63 18.90,7.79 13.26,12.47 15.31,19.90 9.50,15.47 3.69,19.90 5.74,12.47 0.10,7.79 7.18,7.63" fill="#0aa697"/></svg>
<svg style="position:absolute;left:1390.5px;top:119.3px" width="19" height="20" viewBox="0 0 19 20"><polygon points="9.50,0.30 11.82,7.63 18.90,7.79 13.26,12.47 15.31,19.90 9.50,15.47 3.69,19.90 5.74,12.47 0.10,7.79 7.18,7.63" fill="#0aa697"/></svg>
<svg style="position:absolute;left:1309.7px;top:142.3px" width="19" height="20" viewBox="0 0 19 20"><polygon points="9.50,0.30 11.82,7.63 18.90,7.79 13.26,12.47 15.31,19.90 9.50,15.47 3.69,19.90 5.74,12.47 0.10,7.79 7.18,7.63" fill="#0aa697"/></svg>
<svg style="position:absolute;left:1329.9px;top:142.3px" width="19" height="20" viewBox="0 0 19 20"><polygon points="9.50,1.20 11.63,7.97 18.10,8.11 12.94,12.44 14.82,19.30 9.50,15.21 4.18,19.30 6.06,12.44 0.90,8.11 7.37,7.97" fill="none" stroke="#d4d4d4" stroke-width="1"/><clipPath id="cp12"><rect x="0" y="0" width="7.60" height="20"/></clipPath><polygon points="9.50,0.30 11.82,7.63 18.90,7.79 13.26,12.47 15.31,19.90 9.50,15.47 3.69,19.90 5.74,12.47 0.10,7.79 7.18,7.63" fill="#0aa697" clip-path="url(#cp12)"/></svg>
<svg style="position:absolute;left:1350.1000000000001px;top:142.3px" width="19" height="20" viewBox="0 0 19 20"><polygon points="9.50,1.20 11.63,7.97 18.10,8.11 12.94,12.44 14.82,19.30 9.50,15.21 4.18,19.30 6.06,12.44 0.90,8.11 7.37,7.97" fill="none" stroke="#d4d4d4" stroke-width="1"/></svg>
<svg style="position:absolute;left:1370.3px;top:142.3px" width="19" height="20" viewBox="0 0 19 20"><polygon points="9.50,1.20 11.63,7.97 18.10,8.11 12.94,12.44 14.82,19.30 9.50,15.21 4.18,19.30 6.06,12.44 0.90,8.11 7.37,7.97" fill="none" stroke="#d4d4d4" stroke-width="1"/></svg>
<svg style="position:absolute;left:1390.5px;top:142.3px" width="19" height="20" viewBox="0 0 19 20"><polygon points="9.50,1.20 11.63,7.97 18.10,8.11 12.94,12.44 14.82,19.30 9.50,15.21 4.18,19.30 6.06,12.44 0.90,8.11 7.37,7.97" fill="none" stroke="#d4d4d4" stroke-width="1"/></svg>
<svg style="position:absolute;left:1309.7px;top:234.3px" width="19" height="20" viewBox="0 0 19 20"><polygon points="9.50,0.30 11.82,7.63 18.90,7.79 13.26,12.47 15.31,19.90 9.50,15.47 3.69,19.90 5.74,12.47 0.10,7.79 7.18,7.63" fill="#0aa697"/></svg>
<svg style="position:absolute;left:1329.9px;top:234.3px" width="19" height="20" viewBox="0 0 19 20"><polygon points="9.50,1.20 11.63,7.97 18.10,8.11 12.94,12.44 14.82,19.30 9.50,15.21 4.18,19.30 6.06,12.44 0.90,8.11 7.37,7.97" fill="none" stroke="#d4d4d4" stroke-width="1"/><clipPath id="cp17"><rect x="0" y="0" width="7.60" height="20"/></clipPath><polygon points="9.50,0.30 11.82,7.63 18.90,7.79 13.26,12.47 15.31,19.90 9.50,15.47 3.69,19.90 5.74,12.47 0.10,7.79 7.18,7.63" fill="#0aa697" clip-path="url(#cp17)"/></svg>
<svg style="position:absolute;left:1350.1000000000001px;top:234.3px" width="19" height="20" viewBox="0 0 19 20"><polygon points="9.50,1.20 11.63,7.97 18.10,8.11 12.94,12.44 14.82,19.30 9.50,15.21 4.18,19.30 6.06,12.44 0.90,8.11 7.37,7.97" fill="none" stroke="#d4d4d4" stroke-width="1"/></svg>
<svg style="position:absolute;left:1370.3px;top:234.3px" width="19" height="20" viewBox="0 0 19 20"><polygon points="9.50,1.20 11.63,7.97 18.10,8.11 12.94,12.44 14.82,19.30 9.50,15.21 4.18,19.30 6.06,12.44 0.90,8.11 7.37,7.97" fill="none" stroke="#d4d4d4" stroke-width="1"/></svg>
<svg style="position:absolute;left:1390.5px;top:234.3px" width="19" height="20" viewBox="0 0 19 20"><polygon points="9.50,1.20 11.63,7.97 18.10,8.11 12.94,12.44 14.82,19.30 9.50,15.21 4.18,19.30 6.06,12.44 0.90,8.11 7.37,7.97" fill="none" stroke="#d4d4d4" stroke-width="1"/></svg>
<div style="left:389px;top:373px;width:1133px;height:224px;background:#ffffff;"></div>
<div style="left:389px;top:373px;width:1133px;height:6px;background:#5f6ea6;"></div>
<div style="left:389px;top:379px;width:1133px;height:22px;background:#f4cc84;"></div>
<span style="position:absolute;top:382.50px;height:16px;line-height:16px;font-size:11.5px;color:#1e1e1e;white-space:pre;left:395px;letter-spacing:-0.117px;">Elements</span>
<svg style="position:absolute;left:1458px;top:384px" width="13" height="10" viewBox="0 0 13 10"><path d="M1.8 2.4 L6.3 6.9 L10.8 2.4" stroke="#3a3a3a" stroke-width="1.5" fill="none"/></svg>
<svg style="position:absolute;left:1482px;top:383px" width="11" height="12" viewBox="0 0 11 12"><path d="M3.5 1.5 L7.5 1.5 L7.5 6.2 L3.5 6.2 Z M1.3 6.5 L9.7 6.5 M5.5 6.5 L5.5 11.5 M6.9 1.5 L6.9 6" stroke="#3a3a3a" stroke-width="1.1" fill="none"/></svg>
<svg style="position:absolute;left:1506px;top:384px" width="12" height="11" viewBox="0 0 12 11"><path d="M1.8 1.3 L10.2 9.7 M10.2 1.3 L1.8 9.7" stroke="#2f2f2f" stroke-width="2" fill="none"/></svg>
<div style="left:392px;top:404px;width:1128px;height:34px;background:#a7bafa;"></div>
<div style="left:392px;top:438px;width:1128px;height:1px;background:#8f9ccb;"></div>
<div style="left:392px;top:404px;width:1px;height:193px;background:#aab5dc;"></div>
<div style="left:1519px;top:404px;width:1px;height:193px;background:#b4bee2;"></div>
<div style="left:415px;top:404px;width:1px;height:34px;background:#8f9fd8;"></div>
<div style="left:400px;top:419px;width:9px;height:2px;background:#2a2a2a;"></div>
<span style="position:absolute;top:412.50px;height:16px;line-height:16px;font-size:11.5px;color:#1b1b2b;white-space:pre;left:418.2px;letter-spacing:0.002px;">TableElement (GridTableElement)</span>
<div style="left:1376px;top:409px;width:140px;height:24px;background:#ffffff;border:1px solid #8a9bd0;box-sizing:border-box;"></div>
<div style="left:1493px;top:410px;width:22px;height:22px;background:#f3f6fd;border-left:1px solid #8a9bd0;box-sizing:border-box;"></div>
<svg style="position:absolute;left:1500px;top:418px" width="9" height="7" viewBox="0 0 9 7"><path d="M0.2 0.3 L8.8 0.3 L4.5 6.6 Z" fill="#2d2d2d"/></svg>
<span style="position:absolute;top:412.50px;height:16px;line-height:16px;font-size:11.5px;color:#1e1e1e;white-space:pre;left:1379.5px;letter-spacing:0.139px;">No Filter</span>
<div style="left:393px;top:439px;width:1127px;height:24px;background:linear-gradient(#ffffff,#f0f0f2);"></div>
<div style="left:395px;top:440px;width:25px;height:22px;background:#f4cc84;border:1px solid #e3b565;box-sizing:border-box;"></div>
<span style="position:absolute;top:443.50px;height:16px;line-height:16px;font-size:13px;color:#45423c;white-space:pre;left:397.9px;letter-spacing:-0.251px;">A-Z</span>
<div style="left:424px;top:440px;width:25px;height:22px;background:#f3f6fd;border:1px solid #95a6d6;box-sizing:border-box;"></div>
<svg style="position:absolute;left:428px;top:443px" width="17" height="16" viewBox="0 0 17 16"><path d="M1 1 L6.2 4 L1 7 Z M1 9 L6.2 12 L1 15 Z" fill="#2a2a2a"/><path d="M6 2.5 H15.2 M6 5.5 H15.2 M6 10.5 H15.2 M6 13.5 H15.2" stroke="#2a2a2a" stroke-width="1.1"/></svg>
<div style="left:453px;top:440px;width:1065px;height:22px;background:#ffffff;border:1px solid #a3b2dc;box-sizing:border-box;"></div>
<svg style="position:absolute;left:1499px;top:444px" width="15" height="15" viewBox="0 0 15 15"><circle cx="5.6" cy="5.6" r="4" fill="none" stroke="#4a4a4a" stroke-width="1.2"/><path d="M8.6 8.6 L13 13" stroke="#4a4a4a" stroke-width="1.8"/></svg>
<div style="left:417px;top:464px;width:1px;height:133px;background:#97a5d0;"></div>
<div style="left:959px;top:464px;width:1px;height:133px;background:#97a5d0;"></div>
<div style="left:1502px;top:464px;width:1px;height:133px;background:#97a5d0;"></div>
<div style="left:418px;top:471px;width:1085px;height:1px;background:#97a5d0;"></div>
<div style="left:418px;top:494px;width:1085px;height:1px;background:#97a5d0;"></div>
<div style="left:418px;top:517px;width:1085px;height:1px;background:#97a5d0;"></div>
<div style="left:418px;top:540px;width:1085px;height:1px;background:#97a5d0;"></div>
<div style="left:418px;top:563px;width:1085px;height:1px;background:#97a5d0;"></div>
<div style="left:418px;top:586px;width:1085px;height:1px;background:#97a5d0;"></div>
<div style="left:968px;top:464px;width:1px;height:1px;background:#555;"></div>
<div style="left:1503px;top:464px;width:17px;height:133px;background:#f8f9fe;"></div>
<svg style="position:absolute;left:1507px;top:469px" width="9" height="8" viewBox="0 0 9 8"><path d="M0.2 7.5 L4.5 0.6 L8.8 7.5 Z" fill="#2d2d2d"/></svg>
<div style="left:1506.5px;top:575.5px;width:10px;height:9.5px;background:#93a2cd;"></div>
<div style="left:393px;top:518px;width:566px;height:22px;background:#f4cc84;"></div>
<div style="left:417px;top:518px;width:1px;height:22px;background:#c9bd9e;"></div>
<div style="left:959px;top:517px;width:544px;height:24px;background:#ffffff;border:1px solid #8fa0d6;box-sizing:border-box;"></div>
<svg style="position:absolute;left:402px;top:523px" width="8" height="10" viewBox="0 0 8 10"><path d="M0.6 0.6 L6.8 5 L0.6 9.4 Z" fill="#3a3a3a"/></svg>
<span style="position:absolute;top:475.00px;height:16px;line-height:16px;font-size:11px;color:#1e1e1e;white-space:pre;left:420.7px;letter-spacing:0.122px;">RightToLeft</span>
<span style="position:absolute;top:498.00px;height:16px;line-height:16px;font-size:11px;color:#1e1e1e;white-space:pre;left:420.7px;letter-spacing:0.030px;">RippleAnimationColor</span>
<span style="position:absolute;top:520.50px;height:16px;line-height:16px;font-size:11px;color:#111;white-space:pre;left:420.7px;font-weight:bold;letter-spacing:0.121px;">RowDragHint</span>
<span style="position:absolute;top:543.50px;height:16px;line-height:16px;font-size:11px;color:#111;white-space:pre;left:420.7px;font-weight:bold;letter-spacing:0.055px;">RowHeaderColumnWidth</span>
<span style="position:absolute;top:566.50px;height:16px;line-height:16px;font-size:11px;color:#111;white-space:pre;left:420.7px;font-weight:bold;letter-spacing:0.116px;">RowHeight</span>
<span style="position:absolute;top:589.50px;height:16px;line-height:16px;font-size:11px;color:#111;white-space:pre;left:420.7px;font-weight:bold;letter-spacing:0.098px;">RowSpacing</span>
<div style="left:962px;top:476px;width:13px;height:13px;background:#ffffff;border:1px solid #95a6d6;box-sizing:border-box;"></div>
<div style="left:963px;top:498px;width:20px;height:16px;background:#ffffff;border:1px solid #7a7a7a;box-sizing:border-box;"></div>
<span style="position:absolute;top:498.00px;height:16px;line-height:16px;font-size:11px;color:#1e1e1e;white-space:pre;left:991.4px;letter-spacing:-0.097px;">128, 255, 255, 255</span>
<span style="position:absolute;top:520.50px;height:16px;line-height:16px;font-size:11px;color:#111;white-space:pre;left:962px;font-weight:bold;letter-spacing:0.586px;width:519.5px;overflow:hidden;">77u/PD94bWwgdmVyc2lvbj0iMS4wIiBlbmNvZGluZz0idXRmLTgiPz48UmFkSW1hZ2VTaGFwZ</span>
<div style="left:1487px;top:529px;width:2px;height:2px;background:#222;"></div><div style="left:1491px;top:529px;width:2px;height:2px;background:#222;"></div><div style="left:1495px;top:529px;width:2px;height:2px;background:#222;"></div>
<span style="position:absolute;top:543.50px;height:16px;line-height:16px;font-size:11px;color:#111;white-space:pre;left:962px;font-weight:bold;">24</span>
<span style="position:absolute;top:566.50px;height:16px;line-height:16px;font-size:11px;color:#111;white-space:pre;left:962px;font-weight:bold;">24</span>
<span style="position:absolute;top:589.50px;height:16px;line-height:16px;font-size:11px;color:#111;white-space:pre;left:962px;font-weight:bold;">-1</span>
<svg style="position:absolute;left:943px;top:523.0px" width="11" height="12" viewBox="0 0 11 12" shape-rendering="crispEdges"><rect x="1.5" y="2.5" width="8" height="8" fill="#fff" stroke="#333"/><rect x="4" y="1" width="3" height="2" fill="#333"/><rect x="3" y="4" width="5" height="2" fill="#333"/><rect x="5" y="6" width="1" height="3" fill="#333"/><rect x="3" y="8" width="5" height="1" fill="#333"/></svg>
<svg style="position:absolute;left:943px;top:546.0px" width="11" height="12" viewBox="0 0 11 12" shape-rendering="crispEdges"><rect x="1.5" y="2.5" width="8" height="8" fill="#fff" stroke="#333"/><rect x="4" y="1" width="3" height="2" fill="#333"/><rect x="3" y="4" width="5" height="2" fill="#333"/><rect x="5" y="6" width="1" height="3" fill="#333"/><rect x="3" y="8" width="5" height="1" fill="#333"/></svg>
<svg style="position:absolute;left:943px;top:569.0px" width="11" height="12" viewBox="0 0 11 12" shape-rendering="crispEdges"><rect x="1.5" y="2.5" width="8" height="8" fill="#fff" stroke="#333"/><rect x="4" y="1" width="3" height="2" fill="#333"/><rect x="3" y="4" width="5" height="2" fill="#333"/><rect x="5" y="6" width="1" height="3" fill="#333"/><rect x="3" y="8" width="5" height="1" fill="#333"/></svg>
<svg style="position:absolute;left:943px;top:592.0px" width="11" height="12" viewBox="0 0 11 12" shape-rendering="crispEdges"><rect x="1.5" y="2.5" width="8" height="8" fill="#fff" stroke="#333"/><rect x="4" y="1" width="3" height="2" fill="#333"/><rect x="3" y="4" width="5" height="2" fill="#333"/><rect x="5" y="6" width="1" height="3" fill="#333"/><rect x="3" y="8" width="5" height="1" fill="#333"/></svg>
<div style="left:396px;top:404.5px;width:211px;height:35.5px;border:3px solid #f80409;border-radius:2.5px;box-sizing:border-box;"></div>
<div style="left:395px;top:514.5px;width:1110.5px;height:28.5px;border:3px solid #f80409;border-radius:2.5px;box-sizing:border-box;"></div>
<div style="left:675px;top:30px;width:598px;height:398px;background:#fbfbfb;border-radius:8px;overflow:hidden;box-shadow:0 27px 68px rgba(0,0,0,0.21), 0 0 1px rgba(0,0,0,0.45);"><div style="left:0px;top:0px;width:598px;height:25px;background:#41568f;"></div>
<svg style="position:absolute;left:5px;top:5px" width="14" height="14" viewBox="0 0 14 14" shape-rendering="crispEdges"><rect x="0.5" y="0.5" width="13" height="13" fill="none" stroke="#cbc6b8"/><rect x="5" y="0" width="1" height="14" fill="#cbc6b8"/><rect x="0" y="4" width="6" height="1" fill="#cbc6b8"/><rect x="0" y="11" width="6" height="1" fill="#cbc6b8"/><rect x="5" y="8" width="9" height="1" fill="#cbc6b8"/><rect x="11" y="8" width="1" height="6" fill="#cbc6b8"/><rect x="6" y="1" width="7" height="6" fill="#ffd640"/><rect x="6" y="1" width="7" height="1" fill="#f2b100"/><rect x="6" y="1" width="1" height="6" fill="#f2b100"/><rect x="8" y="3" width="4" height="3" fill="#ffe98a"/><rect x="1" y="5" width="4" height="5" fill="#c81e1e"/><rect x="2" y="6" width="1" height="3" fill="#ff8a8a"/><rect x="6" y="9" width="5" height="4" fill="#3f7fe0"/><rect x="7" y="10" width="3" height="2" fill="#8fbcff"/></svg>
<div style="left:533px;top:12px;width:10px;height:2px;background:#ffffff;"></div>
<div style="left:557px;top:6px;width:10px;height:10px;border:1px solid #fff;border-top:3px solid #fff;box-sizing:border-box;"></div>
<svg style="position:absolute;left:580px;top:5px" width="12" height="12" viewBox="0 0 12 12"><path d="M1.5 1.5 L10.5 10.5 M10.5 1.5 L1.5 10.5" stroke="#fff" stroke-width="2.1" fill="none"/></svg></div>
<span style="position:absolute;top:34.50px;height:16px;line-height:16px;font-size:12px;color:#ffffff;white-space:pre;left:705.5px;letter-spacing:-0.338px;">Edit Image Shape</span>
<div style="left:683px;top:61px;width:250px;height:263px;background:#f0f0f0;"></div>
<div style="left:685px;top:62px;width:23px;height:21px;background:#cde6f7;border:1px solid #90c8f6;box-sizing:border-box;border-radius:3px;"></div>
<svg style="position:absolute;left:687px;top:64px" width="18" height="18" viewBox="0 0 18 18" shape-rendering="crispEdges"><rect x="1.5" y="1.5" width="6" height="6" fill="#fff" stroke="#3dbfae"/><rect x="3" y="4" width="3" height="1" fill="#111"/><rect x="4" y="3" width="1" height="3" fill="#111"/><rect x="1.5" y="10.5" width="6" height="6" fill="#fff" stroke="#3dbfae"/><rect x="3" y="13" width="3" height="1" fill="#111"/><rect x="4" y="12" width="1" height="3" fill="#111"/><rect x="9" y="3" width="4" height="1" fill="#222"/><rect x="9" y="14" width="4" height="1" fill="#222"/><rect x="10" y="5" width="3" height="1" fill="#7a9"/><rect x="14" y="5" width="3" height="1" fill="#97b"/><rect x="10" y="7" width="3" height="1" fill="#7a9"/><rect x="14" y="7" width="3" height="1" fill="#97b"/><rect x="10" y="9" width="3" height="1" fill="#7a9"/><rect x="14" y="9" width="3" height="1" fill="#97b"/><rect x="10" y="11" width="3" height="1" fill="#7a9"/><rect x="14" y="11" width="3" height="1" fill="#97b"/><rect x="10" y="16" width="3" height="1" fill="#7a9"/><rect x="14" y="16" width="3" height="1" fill="#97b"/></svg>
<span style="position:absolute;top:60.50px;height:16px;line-height:16px;font-size:9.5px;color:#1f5fbf;white-space:pre;left:711px;font-weight:bold;font-family:'Liberation Serif';">A</span>
<span style="position:absolute;top:69.50px;height:16px;line-height:16px;font-size:9.5px;color:#8a3b5a;white-space:pre;left:711px;font-weight:bold;font-family:'Liberation Serif';">Z</span>
<svg style="position:absolute;left:719px;top:65px" width="9" height="16" viewBox="0 0 9 16"><path d="M4.5 0.5 V12" stroke="#111" stroke-width="1"/><path d="M2.2 10.6 L4.5 14.8 L6.8 10.6 Z" fill="#111"/></svg>
<div style="left:733px;top:63px;width:1px;height:21px;background:#5a5a5a;"></div>
<svg style="position:absolute;left:740px;top:65px" width="16" height="15" viewBox="0 0 16 15" shape-rendering="crispEdges"><rect x="0.5" y="0.5" width="15" height="14" fill="#ececec" stroke="#a8a8a8"/><rect x="1" y="1" width="14" height="2" fill="#c4c4c4"/><rect x="3.5" y="5.5" width="9" height="6" fill="#e0e0e0" stroke="#b0b0b0"/><rect x="3" y="4" width="5" height="2" fill="#d0d0d0"/><rect x="5" y="8" width="5" height="1" fill="#aaa"/></svg>
<div style="left:683px;top:86px;width:250px;height:238px;background:#ffffff;border:1px solid #828790;box-sizing:border-box;"></div>
<div style="left:684px;top:87px;width:21px;height:209px;background:#f0f3fa;"></div>
<div style="left:705px;top:87px;width:227px;height:19px;background:#f0f3fa;"></div>
<div style="left:705px;top:106px;width:57px;height:190px;background:#fafbfe;"></div>
<div style="left:705px;top:105px;width:227px;height:1px;background:#eef1f8;"></div>
<div style="left:705px;top:124px;width:227px;height:1px;background:#eef1f8;"></div>
<div style="left:705px;top:143px;width:227px;height:1px;background:#eef1f8;"></div>
<div style="left:705px;top:162px;width:227px;height:1px;background:#eef1f8;"></div>
<div style="left:705px;top:181px;width:227px;height:1px;background:#eef1f8;"></div>
<div style="left:705px;top:200px;width:227px;height:1px;background:#eef1f8;"></div>
<div style="left:705px;top:219px;width:227px;height:1px;background:#eef1f8;"></div>
<div style="left:705px;top:238px;width:227px;height:1px;background:#eef1f8;"></div>
<div style="left:705px;top:257px;width:227px;height:1px;background:#eef1f8;"></div>
<div style="left:705px;top:276px;width:227px;height:1px;background:#eef1f8;"></div>
<div style="left:705px;top:295px;width:227px;height:1px;background:#eef1f8;"></div>
<div style="left:761px;top:106px;width:1px;height:190px;background:#eef1f8;"></div>
<svg style="position:absolute;left:688px;top:93px" width="11" height="8" viewBox="0 0 11 8"><path d="M1.4 1.8 L5.3 5.8 L9.2 1.8" fill="none" stroke="#1e1e1e" stroke-width="1.6"/></svg>
<span style="position:absolute;top:88.50px;height:16px;line-height:16px;font-size:12px;color:#111;white-space:pre;left:709.4px;font-weight:bold;letter-spacing:-0.522px;">Misc</span>
<span style="position:absolute;top:107.50px;height:16px;line-height:16px;font-size:12px;color:#1e1e1e;white-space:pre;left:709.4px;letter-spacing:0.018px;width:51.6px;overflow:hidden;">Alpha</span>
<span style="position:absolute;top:107.50px;height:16px;line-height:16px;font-size:12px;color:#1e1e1e;white-space:pre;left:765.4px;">1</span>
<span style="position:absolute;top:126.50px;height:16px;line-height:16px;font-size:12px;color:#1e1e1e;white-space:pre;left:709.4px;letter-spacing:-0.037px;width:51.6px;overflow:hidden;">Image</span>
<span style="position:absolute;top:126.50px;height:16px;line-height:16px;font-size:12px;color:#111;white-space:pre;left:791px;font-weight:bold;letter-spacing:-0.161px;">System.Drawing.Bitmap</span>
<svg style="position:absolute;left:690px;top:129.5px" width="8" height="10" viewBox="0 0 8 10"><path d="M1.5 1.2 L5.6 5 L1.5 8.8" fill="none" stroke="#7a7a7a" stroke-width="1.3"/></svg>
<span style="position:absolute;top:145.50px;height:16px;line-height:16px;font-size:12px;color:#1e1e1e;white-space:pre;left:709.4px;letter-spacing:0.214px;width:51.6px;overflow:hidden;">Interpolation</span>
<span style="position:absolute;top:145.50px;height:16px;line-height:16px;font-size:12px;color:#1e1e1e;white-space:pre;left:765.4px;letter-spacing:-0.088px;">NearestNeighbor</span>
<span style="position:absolute;top:164.50px;height:16px;line-height:16px;font-size:12px;color:#1e1e1e;white-space:pre;left:709.4px;letter-spacing:0.069px;width:51.6px;overflow:hidden;">Margins</span>
<span style="position:absolute;top:164.50px;height:16px;line-height:16px;font-size:12px;color:#111;white-space:pre;left:765.4px;font-weight:bold;letter-spacing:-0.125px;">13, 0, 0, 0</span>
<svg style="position:absolute;left:690px;top:167.5px" width="8" height="10" viewBox="0 0 8 10"><path d="M1.5 1.2 L5.6 5 L1.5 8.8" fill="none" stroke="#7a7a7a" stroke-width="1.3"/></svg>
<span style="position:absolute;top:183.50px;height:16px;line-height:16px;font-size:12px;color:#1e1e1e;white-space:pre;left:709.4px;letter-spacing:-0.011px;width:51.6px;overflow:hidden;">Padding</span>
<span style="position:absolute;top:183.50px;height:16px;line-height:16px;font-size:12px;color:#111;white-space:pre;left:765.4px;font-weight:bold;letter-spacing:0.087px;">13, 0, -1000, 0</span>
<svg style="position:absolute;left:690px;top:186.5px" width="8" height="10" viewBox="0 0 8 10"><path d="M1.5 1.2 L5.6 5 L1.5 8.8" fill="none" stroke="#7a7a7a" stroke-width="1.3"/></svg>
<span style="position:absolute;top:202.50px;height:16px;line-height:16px;font-size:12px;color:#1e1e1e;white-space:pre;left:709.4px;letter-spacing:0.081px;width:51.6px;overflow:hidden;">PaintMode</span>
<span style="position:absolute;top:202.50px;height:16px;line-height:16px;font-size:12px;color:#111;white-space:pre;left:765.4px;font-weight:bold;letter-spacing:-0.038px;">CenterYStretchX</span>
<span style="position:absolute;top:221.50px;height:16px;line-height:16px;font-size:12px;color:#1e1e1e;white-space:pre;left:709.4px;letter-spacing:-0.095px;width:51.6px;overflow:hidden;">RotateFlipType</span>
<span style="position:absolute;top:221.50px;height:16px;line-height:16px;font-size:12px;color:#1e1e1e;white-space:pre;left:765.4px;letter-spacing:-0.082px;">RotateNoneFlipNone</span>
<span style="position:absolute;top:240.50px;height:16px;line-height:16px;font-size:12px;color:#1e1e1e;white-space:pre;left:709.4px;letter-spacing:-0.194px;width:51.6px;overflow:hidden;">SvgImage</span>
<span style="position:absolute;top:259.50px;height:16px;line-height:16px;font-size:12px;color:#1e1e1e;white-space:pre;left:709.4px;letter-spacing:-0.277px;width:51.6px;overflow:hidden;">UseSegments</span>
<span style="position:absolute;top:259.50px;height:16px;line-height:16px;font-size:12px;color:#1e1e1e;white-space:pre;left:765.4px;letter-spacing:-0.559px;">True</span>
<span style="position:absolute;top:278.50px;height:16px;line-height:16px;font-size:12px;color:#1e1e1e;white-space:pre;left:709.4px;letter-spacing:-0.116px;width:51.6px;overflow:hidden;">VisibleSegments</span>
<span style="position:absolute;top:278.50px;height:16px;line-height:16px;font-size:12px;color:#1e1e1e;white-space:pre;left:765.4px;letter-spacing:0.219px;">All</span>
<div style="left:763px;top:127px;width:20px;height:16px;background:#ffffff;border:1px solid #111;box-sizing:border-box;"></div>
<div style="left:764px;top:134px;width:18px;height:2px;background:#0aa697;"></div>
<svg style="position:absolute;left:768px;top:128px;overflow:hidden" width="10" height="14" viewBox="-1 0 10 14"><path d="M-1 3.6 L4 -0.6 L9 3.6 Z M-1 10.6 L9 10.6 L4 14.8 Z" fill="#0aa697"/></svg>
<div style="left:683px;top:125px;width:250px;height:22.5px;border:3px solid #f80409;border-radius:2.5px;box-sizing:border-box;"></div>
<div style="left:683px;top:327.5px;width:250px;height:58.5px;background:#f0f0f0;border:1px solid #a5a5a5;box-sizing:border-box;"></div>
<span style="position:absolute;top:330.00px;height:16px;line-height:16px;font-size:12px;color:#111;white-space:pre;left:689px;font-weight:bold;letter-spacing:-0.469px;">Alpha</span>
<span style="position:absolute;top:348.00px;height:16px;line-height:16px;font-size:12px;color:#1e1e1e;white-space:pre;left:689px;letter-spacing:-0.135px;">Gets or sets the opacity of the rendered</span>
<span style="position:absolute;top:363.00px;height:16px;line-height:16px;font-size:12px;color:#1e1e1e;white-space:pre;left:689px;letter-spacing:-0.085px;">image. Valid values are within the interval [...</span>
<div style="left:937px;top:60px;width:328px;height:326px;background:#fcfcfc;border:1px solid #000;box-sizing:border-box;"></div>
<div style="left:955px;top:213px;width:309px;height:3px;background:#0aa392;"></div>
<svg style="position:absolute;left:959px;top:202px" width="8" height="25" viewBox="0 0 8 25"><path d="M0 6 L4 0 L8 6 Z M0 19 L8 19 L4 25 Z" fill="#0aa392"/></svg>
<svg style="position:absolute;left:1248px;top:369px" width="16" height="16" viewBox="0 0 16 16"><path d="M1 16 L16 1 M4 16 L16 4 M7 16 L16 7 M10 16 L16 10 M13 16 L16 13" stroke="#111" stroke-width="1.2"/></svg>
<div style="left:1060px;top:391px;width:100px;height:24px;background:#f3f6fd;border:1px solid #95a6d6;box-sizing:border-box;"></div>
<div style="left:1165px;top:391px;width:100px;height:24px;background:#f3f6fd;border:1px solid #95a6d6;box-sizing:border-box;"></div>
<span style="position:absolute;top:395.30px;height:16px;line-height:16px;font-size:12px;color:#1e1e1e;white-space:pre;left:1101px;letter-spacing:-0.672px;">OK</span>
<div style="left:1101px;top:410px;width:9.5px;height:1px;background:#222;"></div>
<span style="position:absolute;top:395.30px;height:16px;line-height:16px;font-size:12px;color:#1e1e1e;white-space:pre;left:1197px;letter-spacing:-0.393px;">Cancel</span>
<div style="left:1197px;top:410px;width:8px;height:1px;background:#222;"></div>
</body></html>
